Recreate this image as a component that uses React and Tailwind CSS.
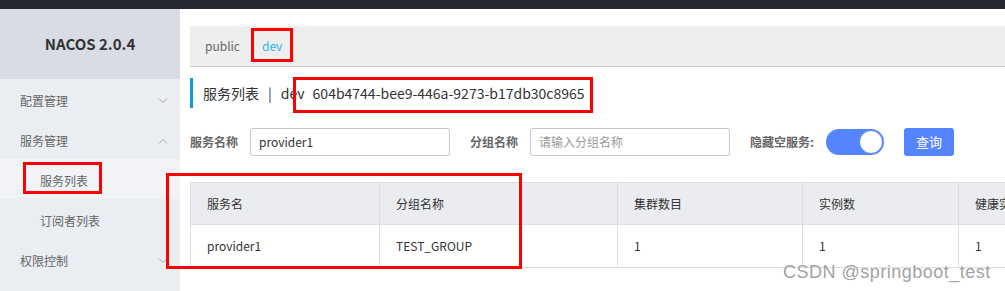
import React from "react";

const font = { fontFamily: '"Noto Sans CJK SC", "Noto Sans", sans-serif' };

function Chevron({ up }) {
  return (
    <svg width="10" height="6" viewBox="0 0 10 6" className="text-[#a0a4ab]">
      <path
        d={up ? "M1 5.5 L5 1.5 L9 5.5" : "M1 0.5 L5 4.5 L9 0.5"}
        fill="none"
        stroke="currentColor"
        strokeWidth="1"
      />
    </svg>
  );
}

function MenuItem({ label, sub, active, chevron }) {
  return (
    <div
      className={`h-10 flex items-center justify-between text-[12px] text-[#666] pt-[4px] ${
        sub ? "pl-10" : "pl-5"
      } pr-[12px] ${active ? "bg-[#f2f3f7]" : ""}`}
    >
      <span>{label}</span>
      {chevron && <Chevron up={chevron === "up"} />}
    </div>
  );
}

export default function App() {
  const cols = [
    { w: "w-[189px]", h: "服务名", v: "provider1" },
    { w: "w-[238px]", h: "分组名称", v: "TEST_GROUP" },
    { w: "w-[185px]", h: "集群数目", v: "1" },
    { w: "w-[156px]", h: "实例数", v: "1" },
    { w: "w-[200px]", h: "健康实例数", v: "1" },
  ];
  return (
    <div className="relative w-[1005px] h-[291px] overflow-hidden bg-white" style={font}>
      <div className="h-[9px] bg-[#262a30]" />
      <div className="flex h-[282px]">
        {/* Sidebar */}
        <div className="w-[180px] shrink-0 bg-[#eaedf1] flex flex-col">
          <div className="h-[70px] bg-[#d9dde3] flex items-center justify-center">
            <span className="text-[15px] font-bold text-[#333]">NACOS 2.0.4</span>
          </div>
          <MenuItem label="配置管理" chevron="down" />
          <MenuItem label="服务管理" chevron="up" />
          <MenuItem label="服务列表" sub active />
          <MenuItem label="订阅者列表" sub />
          <MenuItem label="权限控制" chevron="down" />
        </div>
        {/* Main */}
        <div className="flex-1 overflow-hidden pl-[10px] flex flex-col">
          <div className="mt-[17px] h-[41px] bg-[#eeeeee] border-b border-[#cccccc] flex items-center gap-[22px] pl-[15px] text-[12px] shrink-0">
            <span className="text-[#666]">public</span>
            <span className="text-[#2eb3e8]">dev</span>
          </div>
          <div className="mt-[11px] h-[30px] flex items-center border-l-[3px] border-[#0f9bd7] pl-[10px] text-[14px] text-[#333] shrink-0">
            <span>服务列表</span>
            <span className="mx-[9px]">|</span>
            <span>dev</span>
            <span className="ml-[8px]">604b4744-bee9-446a-9273-b17db30c8965</span>
          </div>
          <div className="mt-[20px] h-[28px] flex items-center text-[12px] shrink-0">
            <span className="font-bold text-[#666] w-[60px]">服务名称</span>
            <div className="w-[200px] h-[28px] border border-[#c4c6cf] rounded-[3px] flex items-center pl-[8px] text-[#333]">
              provider1
            </div>
            <span className="font-bold text-[#666] ml-[20px] w-[60px]">分组名称</span>
            <div className="w-[200px] h-[28px] border border-[#c4c6cf] rounded-[3px] flex items-center pl-[8px] text-[#999]">
              请输入分组名称
            </div>
            <span className="font-bold text-[#666] ml-[20px] w-[76px]">隐藏空服务:</span>
            <div className="w-[58px] h-[26px] rounded-full bg-[#5584ff] flex items-center justify-end pr-[1px]">
              <div className="w-[24px] h-[24px] rounded-full bg-white border border-[#5584ff]" />
            </div>
            <div className="ml-[20px] w-[50px] h-[28px] rounded-[3px] bg-[#5584ff] text-white text-[13px] flex items-center justify-center">
              查询
            </div>
          </div>
          <div className="mt-[26px] flex flex-col border border-[#dcdee3] w-max text-[12px] text-[#333] shrink-0">
            <div className="flex bg-[#ebecf0] h-[42px] border-b border-[#dcdee3]">
              {cols.map((c, i) => (
                <div
                  key={i}
                  className={`${c.w} shrink-0 flex items-center pl-[16px] ${
                    i < cols.length - 1 ? "border-r border-[#dcdee3]" : ""
                  }`}
                >
                  {c.h}
                </div>
              ))}
            </div>
            <div className="flex h-[42px]">
              {cols.map((c, i) => (
                <div
                  key={i}
                  className={`${c.w} shrink-0 flex items-center pl-[16px] ${
                    i < cols.length - 1 ? "border-r border-[#dcdee3]" : ""
                  }`}
                >
                  {c.v}
                </div>
              ))}
            </div>
          </div>
        </div>
      </div>

      {/* Red annotation boxes */}
      <div className="absolute left-[251px] top-[28px] w-[42px] h-[34px] border-[3px] border-[#ff0000]" />
      <div className="absolute left-[293px] top-[77px] w-[300px] h-[36px] border-[3px] border-[#ff0000]" />
      <div className="absolute left-[23px] top-[162px] w-[79px] h-[32px] border-[3px] border-[#ff0000]" />
      <div className="absolute left-[166px] top-[173px] w-[356px] h-[96px] border-[3px] border-[#ff0000]" />

      {/* Watermark */}
      <div
        className="absolute left-[783px] top-[259px] text-[18px] tracking-[0.5px] text-[#a3a3a3] whitespace-nowrap"
        style={{ fontFamily: '"Liberation Sans", Arial, sans-serif' }}
      >
        CSDN @springboot_test
      </div>
    </div>
  );
}
